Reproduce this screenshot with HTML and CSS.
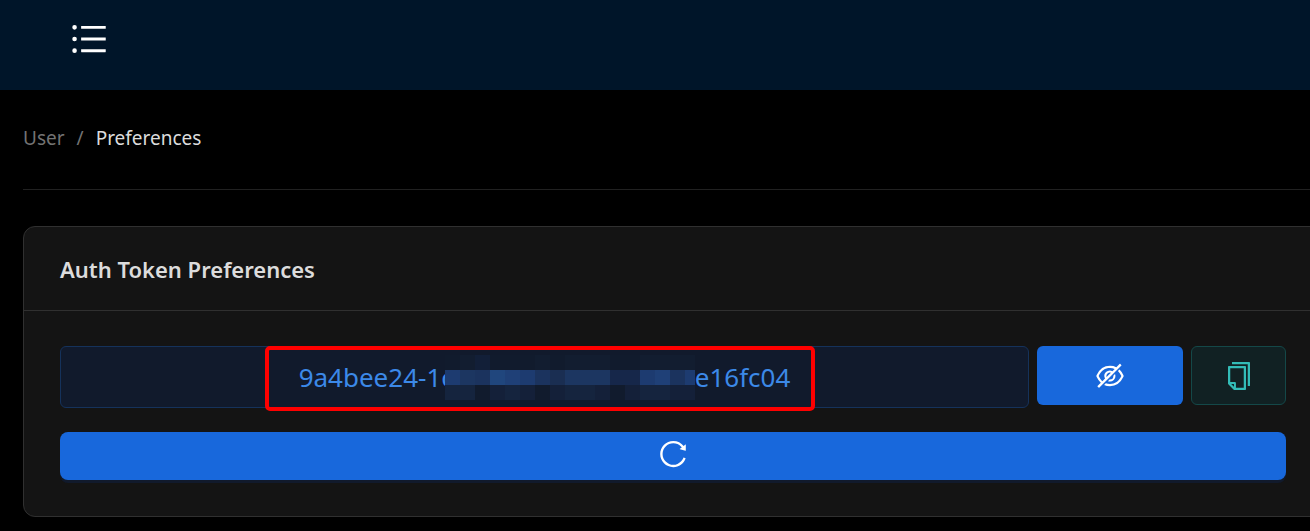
FILE: index.html
```html
<!DOCTYPE html>
<html lang="en">
<head>
<meta charset="utf-8">
<title>Preferences</title>
<link rel="stylesheet" href="styles.css">
</head>
<body>
<header class="topbar">
  <button class="menu-button" type="button" aria-label="Menu">
    <svg class="menu-icon" viewBox="0 0 1024 1024" aria-hidden="true"><path d="M912 192H328c-4.400 0-8 3.600-8 8v56c0 4.400 3.600 8 8 8h584c4.400 0 8-3.600 8-8v-56c0-4.400-3.600-8-8-8zm0 284H328c-4.400 0-8 3.600-8 8v56c0 4.400 3.600 8 8 8h584c4.400 0 8-3.600 8-8v-56c0-4.400-3.600-8-8-8zm0 284H328c-4.400 0-8 3.600-8 8v56c0 4.400 3.600 8 8 8h584c4.400 0 8-3.600 8-8v-56c0-4.400-3.600-8-8-8zM104 228a56 56 0 1 0 112 0 56 56 0 1 0-112 0zm0 284a56 56 0 1 0 112 0 56 56 0 1 0-112 0zm0 284a56 56 0 1 0 112 0 56 56 0 1 0-112 0z"/></svg>
  </button>
</header>
<main class="content">
  <nav class="breadcrumb" aria-label="Breadcrumb">
    <span>User</span><span>/</span><span class="current">Preferences</span>
  </nav>
  <section class="card">
    <h1 class="card-title">Auth Token Preferences</h1>
    <div class="card-body">
      <div class="token-row">
        <div class="token-box">
          <div class="token">
            <span>9a4bee24-1c</span>
            <svg class="mosaic" viewBox="0 0 250 45" shape-rendering="crispEdges" aria-hidden="true">
              <path fill="#111b2d" d="M0 0h250v45H0z"/>
              <path fill="#121d30" d="M15 0h15v15H15zM90 0h15v15H90zM120 0h45v15h-45zM195 0h55v15h-55z"/>
              <path fill="#121f38" d="M30 0h15v15H30z"/>
              <path fill="#1d3b70" d="M0 15h15v15H0zM75 15h15v15H75zM195 15h15v15h-15zM240 15h10v15h-10z"/>
              <path fill="#1c3661" d="M15 15h15v15H15zM120 15h45v15h-45z"/>
              <path fill="#1b335e" d="M30 15h15v15H30zM90 15h15v15H90zM225 15h15v15h-15z"/>
              <path fill="#20467d" d="M45 15h15v15H45z"/>
              <path fill="#1f4077" d="M60 15h15v15H60zM210 15h15v15h-15z"/>
              <path fill="#1a2e52" d="M105 15h15v15h-15z"/>
              <path fill="#16274a" d="M165 15h15v15h-15zM180 15h15v15h-15z"/>
              <path fill="#15243e" d="M0 30h30v15H0zM60 30h15v15H60zM120 30h30v15h-30zM195 30h30v15h-30z"/>
              <path fill="#142039" d="M45 30h15v15H45zM75 30h15v15H75zM105 30h15v15h-15zM150 30h15v15h-15zM180 30h15v15h-15zM225 30h25v15h-25z"/>
            </svg>
            <span>e16fc04</span>
            <span class="highlight"></span>
          </div>
        </div>
        <button class="button reveal" type="button" aria-label="Hide token">
          <svg class="icon" viewBox="0 0 1024 1024" aria-hidden="true"><path d="M942.2 486.2Q889.47 375.11 816.7 305l-50.88 50.88C807.31 395.53 843.45 447.4 874.7 512 791.5 684.2 673.4 766 512 766q-72.67 0-133.87-22.38L323 798.75Q408 838 512 838q288.3 0 430.2-300.3a60.29 60.29 0 0 0 0-51.5zm-63.57-320.64L836 122.88a8 8 0 0 0-11.32 0L715.31 232.2Q624.86 186 512 186q-288.3 0-430.2 300.3a60.3 60.3 0 0 0 0 51.5q56.69 119.4 136.5 191.41L112.48 835a8 8 0 0 0 0 11.31L155.17 889a8 8 0 0 0 11.31 0l712.15-712.12a8 8 0 0 0 0-11.32zM149.3 512C232.6 339.8 350.7 258 512 258c54.54 0 104.13 9.36 149.12 28.39l-70.3 70.3a176 176 0 0 0-238.13 238.13l-83.42 83.42C223.1 637.49 183.3 582.28 149.3 512zm246.7 0a112.11 112.11 0 0 1 146.2-106.69L401.31 546.2A112 112 0 0 1 396 512z"/><path d="M508 624c-3.46 0-6.87-.16-10.25-.47l-52.82 52.82a176.09 176.09 0 0 0 227.42-227.42l-52.82 52.82c.31 3.38.47 6.79.47 10.25a111.94 111.94 0 0 1-112 112z"/></svg>
        </button>
        <button class="button copy" type="button" aria-label="Copy token">
          <svg class="icon" viewBox="0 0 1024 1024" aria-hidden="true"><path d="M832 64H296c-4.4 0-8 3.600-8 8v56c0 4.400 3.600 8 8 8h496v688c0 4.400 3.600 8 8 8h56c4.400 0 8-3.600 8-8V96c0-17.700-14.300-32-32-32zM704 192H192c-17.700 0-32 14.300-32 32v530.700c0 8.500 3.400 16.600 9.400 22.600l173.300 173.300c2.200 2.200 4.700 4 7.400 5.500v1.900h4.200c3.500 1.300 7.200 2 11 2H704c17.700 0 32-14.300 32-32V224c0-17.700-14.300-32-32-32zM350 856.200L263.900 770H350v86.200zM664 888H414V746c0-22.100-17.900-40-40-40H232V264h432v624z"/></svg>
        </button>
      </div>
      <button class="button reload" type="button" aria-label="Regenerate token">
        <svg class="icon" viewBox="0 0 1024 1024" aria-hidden="true"><path d="M909.1 209.3l-56.4 44.1C775.8 155.1 656.2 92 521.9 92 290 92 102.3 279.5 102 511.5 101.7 743.7 289.8 932 521.9 932c181.3 0 335.8-115 394.6-276.1 1.5-4.2-.7-8.900-4.900-10.300l-56.700-19.500a8 8 0 0 0-10.100 4.800c-1.800 5-3.800 10-5.900 14.900-17.300 41-42.100 77.800-73.700 109.400A344.770 344.770 0 0 1 655.900 829c-42.300 17.900-87.400 27-133.800 27-46.500 0-91.500-9.100-133.800-27A341.500 341.500 0 0 1 279 755.200a342.160 342.160 0 0 1-73.700-109.400c-17.900-42.400-27-87.400-27-133.900s9.100-91.500 27-133.900c17.300-41 42.100-77.800 73.700-109.400 31.600-31.600 68.400-56.400 109.300-73.800 42.300-17.900 87.400-27 133.800-27 46.500 0 91.500 9.100 133.800 27a341.500 341.500 0 0 1 109.300 73.800c9.900 9.900 19.200 20.400 27.800 31.400l-60.200 47a8 8 0 0 0 3 14.100l175.600 43c5 1.200 9.900-2.600 9.900-7.700l.8-180.900c-.1-6.600-7.800-10.300-13-6.200z"/></svg>
      </button>
    </div>
  </section>
</main>
</body>
</html>
```
FILE: styles.css
```css
* { box-sizing: border-box; }
body {
  margin: 0;
  background: #000;
  color: #dcdcdc;
  font-family: "Segoe UI", "Noto Sans", "Open Sans", sans-serif;
  font-size: 19px;
  overflow: hidden;
}
button { font: inherit; cursor: pointer; }
svg { display: block; fill: currentColor; }
.topbar {
  display: flex;
  background: #001529;
  padding: 18px 68px 30px;
}
.menu-button {
  padding: 0;
  border: 0;
  background: none;
  color: #fff;
}
.menu-icon { width: 42px; height: 42px; }
.content { padding-left: 23px; margin-right: -13px; }
.breadcrumb {
  display: flex;
  gap: 12px;
  padding: 32px 0 35px;
  border-bottom: 1px solid #212121;
  line-height: 32px;
  color: #737373;
}
.current { color: #dcdcdc; }
.card {
  margin-top: 36px;
  border: 1px solid #303030;
  border-radius: 12px;
  background: #141414;
}
.card-title {
  margin: 0;
  padding: 26px 36px 24px;
  border-bottom: 1px solid #303030;
  font-size: 22px;
  font-weight: 600;
  line-height: 33px;
}
.card-body { padding: 35px 36px 36px; }
.token-row {
  display: flex;
  align-items: flex-start;
  gap: 8px;
  margin-bottom: 24px;
}
.token-box {
  display: flex;
  justify-content: center;
  flex: 1;
  border: 1px solid #15325b;
  border-radius: 6px;
  background: #111a2c;
}
.token {
  position: relative;
  display: flex;
  align-items: center;
  color: #3c89e8;
  font-size: 26px;
  line-height: 60px;
}
.mosaic {
  width: 250px;
  height: 45px;
  margin-left: -9px;
  z-index: 1;
}
.highlight {
  position: absolute;
  inset: -1px -25px -4px -34px;
  border: 4px solid #f00;
  border-radius: 5px;
}
.button {
  display: flex;
  align-items: center;
  justify-content: center;
  padding: 0;
  border: 0;
  border-radius: 6px;
  background: #1868dc;
  color: #fff;
}
.icon { width: 32px; height: 32px; }
.reveal { width: 146px; height: 59px; }
.copy {
  width: 95px;
  height: 59px;
  border: 1px solid #144848;
  background: #112123;
  color: #33bcb7;
}
.reload {
  width: 100%;
  height: 48px;
  padding-bottom: 4px;
  border-radius: 8px;
  box-shadow: 0 3px 0 #111a2c;
}
```
